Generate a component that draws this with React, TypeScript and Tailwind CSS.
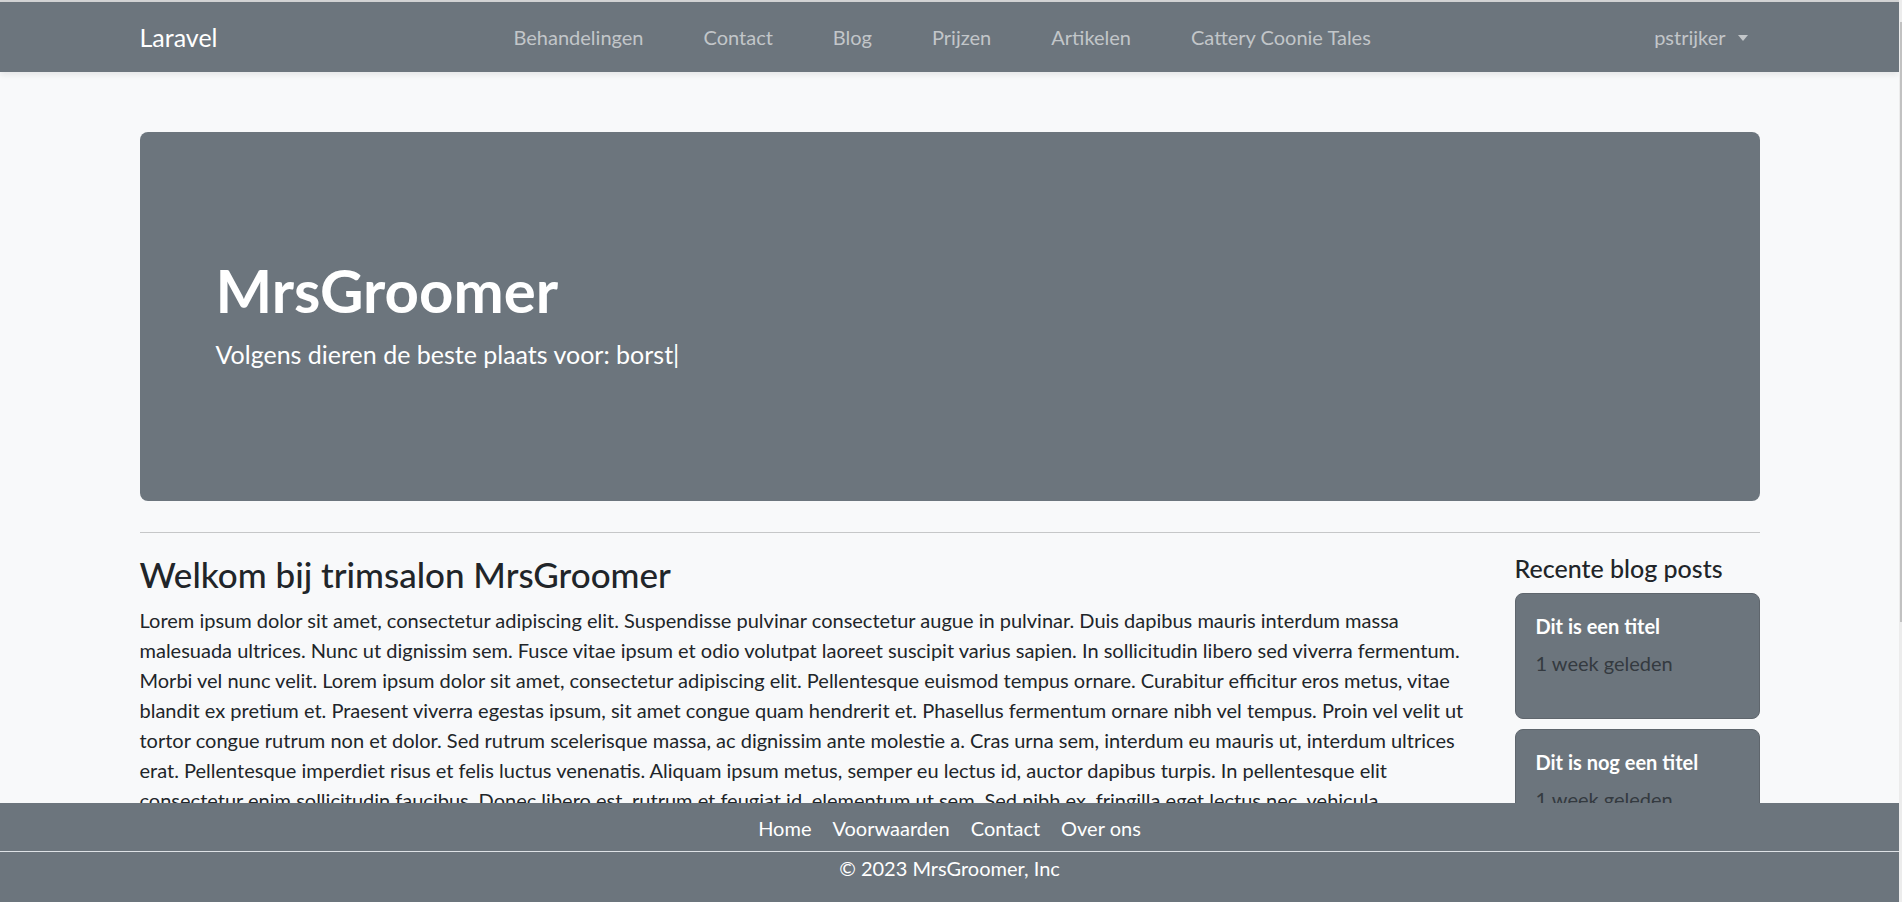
const navLinks = ['Behandelingen', 'Contact', 'Blog', 'Prijzen', 'Artikelen', 'Cattery Coonie Tales'];
const footerLinks = ['Home', 'Voorwaarden', 'Contact', 'Over ons'];

const posts = [
  { title: 'Dit is een titel', date: '1 week geleden' },
  { title: 'Dit is nog een titel', date: '1 week geleden' },
  { title: 'En nog een titel', date: '2 weken geleden' },
];

// regels zoals ze in de browser breken
const lorem = [
  'Lorem ipsum dolor sit amet, consectetur adipiscing elit. Suspendisse pulvinar consectetur augue in pulvinar. Duis dapibus mauris interdum massa',
  'malesuada ultrices. Nunc ut dignissim sem. Fusce vitae ipsum et odio volutpat laoreet suscipit varius sapien. In sollicitudin libero sed viverra fermentum.',
  'Morbi vel nunc velit. Lorem ipsum dolor sit amet, consectetur adipiscing elit. Pellentesque euismod tempus ornare. Curabitur efficitur eros metus, vitae',
  'blandit ex pretium et. Praesent viverra egestas ipsum, sit amet congue quam hendrerit et. Phasellus fermentum ornare nibh vel tempus. Proin vel velit ut',
  'tortor congue rutrum non et dolor. Sed rutrum scelerisque massa, ac dignissim ante molestie a. Cras urna sem, interdum eu mauris ut, interdum ultrices',
  'erat. Pellentesque imperdiet risus et felis luctus venenatis. Aliquam ipsum metus, semper eu lectus id, auctor dapibus turpis. In pellentesque elit',
  'consectetur enim sollicitudin faucibus. Donec libero est, rutrum et feugiat id, elementum ut sem. Sed nibh ex, fringilla eget lectus nec, vehicula',
  'mauris. Nulla facilisi. Vestibulum ante ipsum primis in faucibus orci luctus et ultrices posuere cubilia curae; Integer a lorem sed arcu pharetra.',
  'Aenean tincidunt, nisl id placerat cursus, lacus ipsum volutpat magna, sed sodales metus urna non est. Etiam ac tellus vitae risus vulputate.',
];

const App = () => {
  return (
    <div className="flex min-h-screen bg-[#f8f9fa] font-[Lato,sans-serif] text-[#212529]">
      <div className="min-w-0 flex-1 pb-[140px]">
        <div className="h-[2px] bg-[#d3d4d5]" />
        <nav className="h-[70px] bg-[#6c757d] shadow-[0_3px_6px_rgba(0,0,0,0.08)]">
          <div className="mx-auto flex h-full w-[1620px] items-center">
            <a className="w-[344px] text-[25px] leading-[30px] text-white">Laravel</a>
            <ul className="flex">
              {navLinks.map((link) => (
                <li key={link}>
                  <a className="block px-[30px] text-[20px] leading-[30px] text-[#c2c6c9]">{link}</a>
                </li>
              ))}
            </ul>
            <div className="ml-auto mr-[12px] flex items-center text-[20px] leading-[30px] text-[#c2c6c9]">
              pstrijker
              <span className="ml-[12px] mt-[2px] border-x-[5px] border-t-[6px] border-x-transparent border-t-[#c2c6c9]" />
            </div>
          </div>
        </nav>

        <main className="mx-auto w-[1620px] pt-[60px]">
          <section className="h-[369px] rounded-[8px] bg-[#6c757d] pl-[76px] pt-[122px] text-white">
            <h1 className="text-[60px] font-bold leading-[72px]">MrsGroomer</h1>
            <p className="mt-[10px] text-[25px] leading-[37.5px]">Volgens dieren de beste plaats voor: borst|</p>
          </section>

          <hr className="mt-[31px] border-t border-[#c6c7c8]" />

          <div className="mt-[20px] flex gap-[30px]">
            <div className="w-[1345px]">
              <h3 className="text-[35px] font-medium leading-[42px]">Welkom bij trimsalon MrsGroomer</h3>
              <p className="mt-[10px] text-[20px] leading-[30px]">
                {lorem.map((line, i) => (
                  <span key={i} className="block whitespace-nowrap">{line}</span>
                ))}
              </p>
            </div>
            <aside className="w-[245px]">
              <h5 className="text-[25px] font-medium leading-[30px]">Recente blog posts</h5>
              <div className="mt-[10px] flex flex-col gap-[10px]">
                {posts.map((post) => (
                  <div key={post.title} className="rounded-[8px] border border-[#5f666d] bg-[#6c757d] p-[20px]">
                    <h5 className="text-[20px] font-bold leading-[24px] text-white">{post.title}</h5>
                    <p className="mb-[20px] mt-[10px] text-[20px] leading-[30px] text-[#343a40]">{post.date}</p>
                  </div>
                ))}
              </div>
            </aside>
          </div>
        </main>
      </div>

      <div className="sticky top-0 h-screen w-[3px] bg-[#ececec]">
        <div className="ml-[1px] mt-[22px] h-[600px] w-[2px] bg-[#c1c1c1]" />
      </div>

      <footer className="fixed bottom-0 left-0 right-[3px] h-[99px] bg-[#6c757d] text-white">
        <ul className="flex h-[49px] items-start justify-center gap-[21px] border-b border-[#dee2e6] pt-[10px]">
          {footerLinks.map((link) => (
            <li key={link}>
              <a className="text-[20px] leading-[30px]">{link}</a>
            </li>
          ))}
        </ul>
        <p className="mt-[1px] text-center text-[20px] leading-[30px]">© 2023 MrsGroomer, Inc</p>
      </footer>
    </div>
  );
};

export default App;
